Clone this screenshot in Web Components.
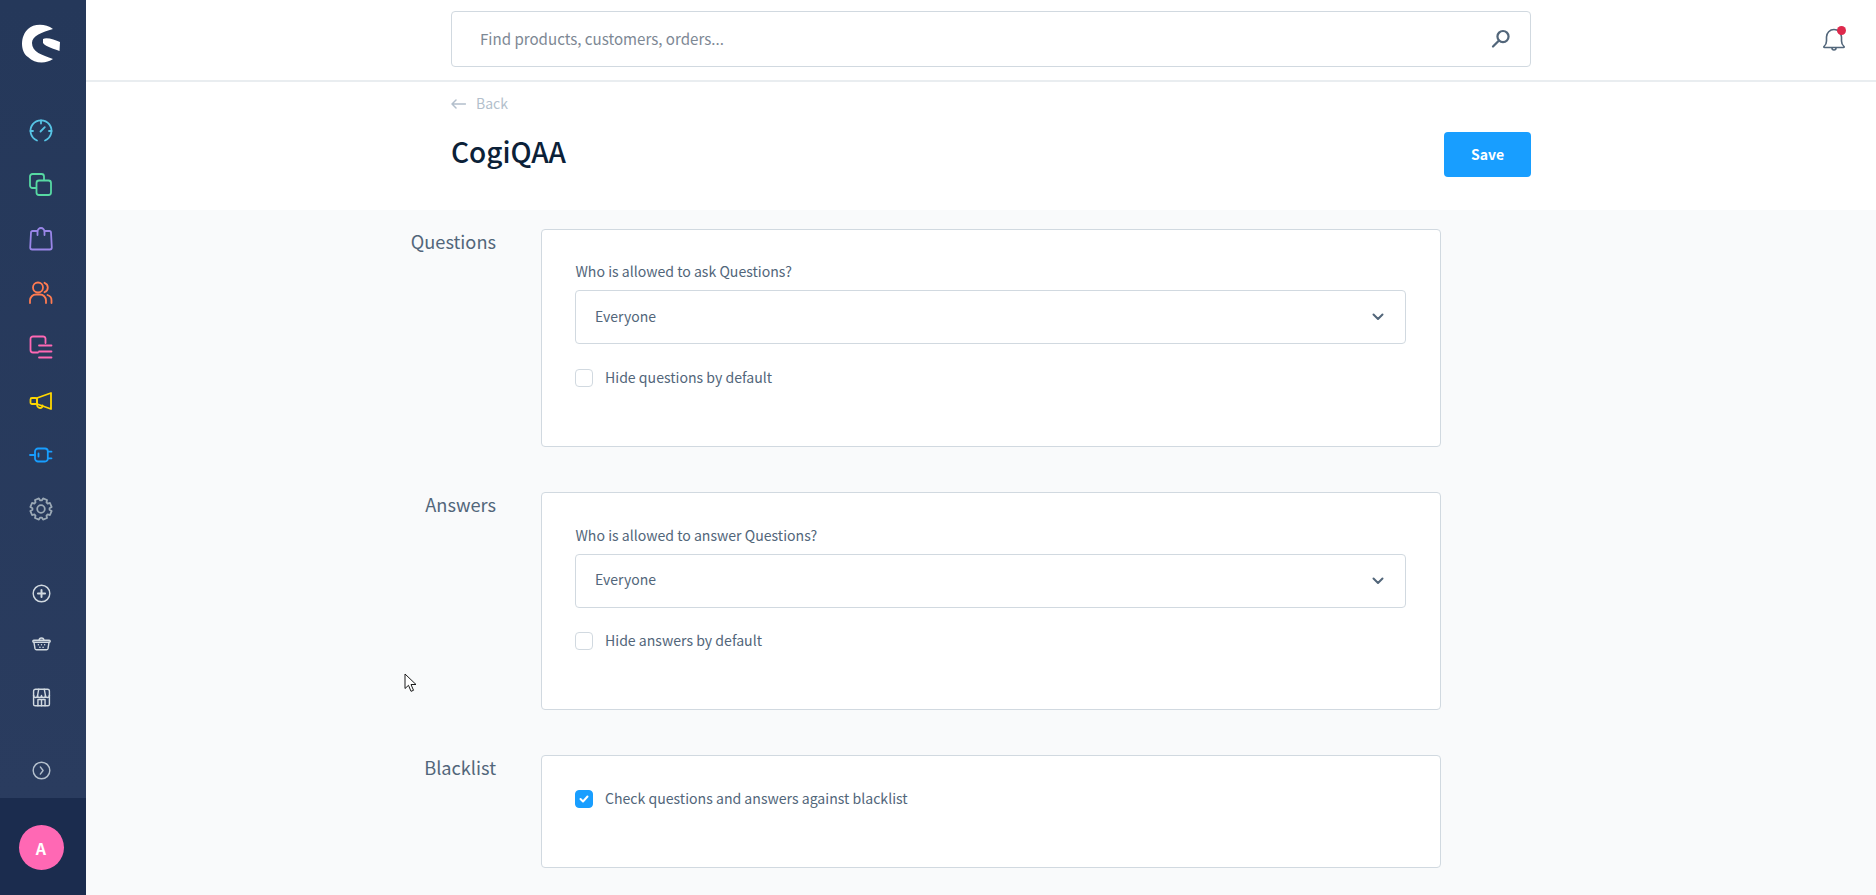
<!DOCTYPE html>
<html lang="en">
<head>
<meta charset="utf-8">
<title>CogiQAA</title>
<style>
  html, body { margin: 0; height: 100%; overflow: hidden; }
  body {
    font-family: "Noto Sans CJK SC", "Noto Sans", sans-serif;
    color: #52667a;
    background: #f9fafb;
  }
  app-shell { height: 100vh; }
</style>
</head>
<body>
<app-shell>
  <app-sidebar slot="side"></app-sidebar>
  <search-bar></search-bar>
  <smart-bar heading="CogiQAA"></smart-bar>
  <page-content>
    <settings-section heading="Questions">
      <select-field label="Who is allowed to ask Questions?" value="Everyone"></select-field>
      <check-field label="Hide questions by default"></check-field>
    </settings-section>
    <settings-section heading="Answers">
      <select-field style="padding:2px 0 24px;--value-pad:4px" label="Who is allowed to answer Questions?" value="Everyone"></select-field>
      <check-field label="Hide answers by default"></check-field>
    </settings-section>
    <settings-section heading="Blacklist">
      <check-field style="margin-top:4px" label="Check questions and answers against blacklist" checked></check-field>
    </settings-section>
  </page-content>
  <mouse-pointer></mouse-pointer>
</app-shell>

<script>
  // 8 lobes round the centre of a 24 box
  function gearPath() {
    let d = "";
    for (let i = 0; i < 8; i++) {
      const a = (i * Math.PI) / 4 + Math.PI / 8;
      const pts = [
        [8.6, a - 0.3],
        [10.8, a - 0.2],
        [10.8, a + 0.2],
        [8.6, a + 0.3],
      ];
      pts.forEach(([r, t], j) => {
        const x = (12 + r * Math.cos(t)).toFixed(2);
        const y = (12 + r * Math.sin(t)).toFixed(2);
        d += (i === 0 && j === 0 ? "M" : "L") + x + " " + y;
      });
    }
    return d + "Z";
  }

  const ICONS = {
    dashboard: `<path d="M8 21.500A10.500 10.500 0 1 1 16 21.500"/><path d="M12 1.500v3M1.500 12h2.500M20 12h2.500"/><path d="M11.500 12.500l4.300-4.300"/>`,
    products: `<rect x="1" y="1" width="14" height="14" rx="2.500"/><rect x="7.500" y="7.500" width="14.500" height="14.500" rx="2.500" fill="var(--side-bg)"/>`,
    orders: `<path d="M8.500 4H3.500A1.500 1.500 0 0 0 2 5.500L1.200 20.500a2 2 0 0 0 2 2h17.600a2 2 0 0 0 2-2L22 5.500A1.500 1.500 0 0 0 20.500 4H15.500"/><path d="M8.500 8V4.500a3.500 3.500 0 0 1 7 0V8"/>`,
    customers: `<circle cx="9" cy="6.500" r="5"/><path d="M1 22v-2.500a6 6 0 0 1 6-6h4a6 6 0 0 1 6 6V22"/><path d="M15.500 1.800a5 5 0 0 1 0 9.400M18.500 14a5.500 5.500 0 0 1 4 5.500V22"/>`,
    content: `<path d="M16.500 8V3.500A2.500 2.500 0 0 0 14 1.500H4A2.500 2.500 0 0 0 1.500 4v11A2.500 2.500 0 0 0 4 17.500h5"/><path d="M10 10.500h12.500M10 16.500h12.500M10 22.500h12.500"/>`,
    marketing: `<path d="M8 9 22 4v16L8 15Z"/><rect x="1.500" y="9" width="6.500" height="6" rx="1.500"/><path d="M8 15.500c0 2 1.500 3.500 3 3.500s2.500-1 2.500-2.500"/>`,
    plugin: `<path d="M1 12h5"/><path d="M9 5.500h7a2.800 2.800 0 0 1 2.800 2.800v7.400a2.800 2.800 0 0 1-2.800 2.800H9c-1.500 0-3-1.500-3-3V8.500c0-1.500 1.500-3 3-3Z"/><path d="M18.800 8.700H22.500M18.800 15.300H22.500M9.500 10.500v3"/>`,
    settings: `<circle cx="12" cy="12" r="3.800"/><path d="${gearPath()}"/>`,
    add: `<circle cx="12" cy="12" r="10.500"/><path d="M12 7.500v9M7.500 12h9" stroke-width="2.500"/>`,
    basket: `<path d="M2.500 10.500l1.300 8a2 2 0 0 0 2 1.500h12.400a2 2 0 0 0 2-1.500l1.300-8"/><rect x="1" y="8" width="22" height="2.500" rx="1.250"/><path d="M9 8a3 3 0 0 1 6 0"/><path d="M8 13.500v.1M12 13.500v.1M16 13.500v.1M10 16.800v.1M14 16.800v.1"/>`,
    shop: `<path d="M2 9.500V4a2.500 2.500 0 0 1 2.500-2.500h15A2.500 2.500 0 0 1 22 4v5.500"/><path d="M2 9.500v11A2 2 0 0 0 4 22.500h16a2 2 0 0 0 2-2v-11"/><path d="M2 9.500a2.500 2.500 0 0 0 5 0 2.500 2.500 0 0 0 5 0 2.500 2.500 0 0 0 5 0 2.500 2.500 0 0 0 5 0"/><path d="M7 9.500 8.500 1.500M17 9.500 15.500 1.500"/><path d="M7.500 22.500V14.500h9v8M12 14.500v8"/>`,
    collapse: `<circle cx="12" cy="12" r="10.500"/><path d="M10.500 7.500l3.500 4.500-3.500 4.500"/>`,
  };

  class AppShell extends HTMLElement {
    constructor() {
      super();
      this.attachShadow({ mode: "open" });
      this.shadowRoot.innerHTML = `
        <style>
          :host { display: flex; position: relative; overflow: hidden; }
          .side { flex: 0 0 86px; }
          .main { flex: 1; min-width: 0; display: flex; flex-direction: column; }
        </style>
        <div class="side"><slot name="side"></slot></div>
        <div class="main"><slot></slot></div>
      `;
    }
  }

  class NavIcon extends HTMLElement {
    constructor() {
      super();
      this.attachShadow({ mode: "open" });
    }
    connectedCallback() {
      const size = this.getAttribute("size") || 24;
      this.shadowRoot.innerHTML = `
        <style>
          :host { display: flex; align-items: center; justify-content: center; height: 54px; padding-right: 4px; }
          svg { fill: none; stroke: ${this.getAttribute("color")}; stroke-width: 1.8; stroke-linecap: round; stroke-linejoin: round; overflow: visible; }
        </style>
        <svg width="${size}" height="${size}" viewBox="0 0 24 24">${ICONS[this.getAttribute("name")]}</svg>
      `;
    }
  }

  class AppSidebar extends HTMLElement {
    constructor() {
      super();
      this.attachShadow({ mode: "open" });
      const main = [
        ["dashboard", "#57c4e5"],
        ["products", "#57d9a3"],
        ["orders", "#9a86e8"],
        ["customers", "#ff7b51"],
        ["content", "#ff68b4"],
        ["marketing", "#ffd700"],
        ["plugin", "#189eff"],
        ["settings", "#9aa8b5"],
      ];
      this.shadowRoot.innerHTML = `
        <style>
          :host {
            display: flex; flex-direction: column; height: 100%;
            --side-bg: #26395b;
            background: linear-gradient(180deg, #25385a, #2a3c5f 798px);
          }
          .logo { height: 104px; flex: none; }
          .logo svg { display: block; }
          .secondary { margin-top: 35px; }
          .secondary nav-icon[name="add"] { height: 45px; }
          .spacer { flex: 1; }
          .footer {
            flex: none; height: 97px; box-sizing: border-box; background: #1b2c4e; padding: 2px 4px 0 0;
            display: flex; align-items: center; justify-content: center;
          }
          .avatar {
            width: 45px; height: 45px; border-radius: 50%; background: #ff68b4;
            color: #fff; font-weight: 700; font-size: 16px;
            display: flex; align-items: center; justify-content: center;
          }
        </style>
        <div class="logo">
          <svg width="86" height="104" viewBox="0 0 86 104">
            <path fill="#fff" d="M53 29C45 23 33 24 28 29C20 36 20 52 28 57C35 64 46 64 53 59C42 55 32 52 32 43C32 36 42 32 53 29Z"/>
            <path fill="#fff" d="M43 39C47 37 55 40 60 42L59.500 51C55 49 46 47 43 43Z"/>
          </svg>
        </div>
        <div>
          ${main.map(([n, c]) => `<nav-icon name="${n}" color="${c}"></nav-icon>`).join("")}
        </div>
        <div class="secondary">
          <nav-icon name="add" color="#d1d9e0" size="19"></nav-icon>
          <nav-icon name="basket" color="#d1d9e0" size="19"></nav-icon>
          <nav-icon name="shop" color="#d1d9e0" size="19"></nav-icon>
        </div>
        <div class="spacer"></div>
        <nav-icon name="collapse" color="#b3bfcc" size="19"></nav-icon>
        <div class="footer" style="margin-top:1px"><div class="avatar">A</div></div>
      `;
    }
  }

  class SearchBar extends HTMLElement {
    constructor() {
      super();
      this.attachShadow({ mode: "open" });
      this.shadowRoot.innerHTML = `
        <style>
          :host {
            display: flex; flex: none; height: 82px; box-sizing: border-box; background: #fff;
            border-bottom: 2px solid #e9edf0; padding: 11px 0 0 365px;
            position: relative;
          }
          .box {
            width: 1080px; height: 56px; box-sizing: border-box;
            border: 1px solid #d1d9e0; border-radius: 4px;
            display: flex; align-items: center; justify-content: space-between;
            padding: 0 19px 0 28px;
          }
          .hint { font-size: 15.1px; color: #7d8894; padding-bottom: 2px; }
          .bell { position: absolute; left: 1735px; top: 26px; }
          svg { fill: none; stroke: #52667a; stroke-width: 2; stroke-linecap: round; stroke-linejoin: round; display: block; }
          .bell { stroke-width: 1.6; }
        </style>
        <div class="box">
          <span class="hint">Find products, customers, orders...</span>
          <svg width="20" height="20" viewBox="0 0 18 18"><circle cx="10.800" cy="6.800" r="5"/><path d="M7.200 10.400 1.800 15.800"/></svg>
        </div>
        <svg class="bell" width="26" height="26" viewBox="0 0 26 26">
          <path d="M3 20.500c1.500-1.200 2.500-3 2.500-5.500V11a7.500 7.500 0 0 1 15 0v4c0 2.500 1 4.300 2.500 5.500.4.500.2 1-.5 1H3.500c-.7 0-.9-.5-.5-1Z"/>
          <path d="M11 22a2 2 0 0 0 4 0"/>
          <circle cx="20.500" cy="4.500" r="4.500" fill="#de294c" stroke="none"/>
        </svg>
      `;
    }
  }

  class SmartBar extends HTMLElement {
    constructor() {
      super();
      this.attachShadow({ mode: "open" });
    }
    connectedCallback() {
      this.shadowRoot.innerHTML = `
        <style>
          :host { display: block; flex: none; height: 128px; background: #fff; padding-left: 365px; }
          .inner { width: 1080px; }
          .back {
            display: flex; align-items: center; gap: 10px; height: 43px;
            font-size: 14px; color: #b3bfcc;
          }
          .back span { padding-bottom: 1px; }
          .row { display: flex; justify-content: space-between; align-items: flex-start; }
          h1 { margin: 0; font-size: 28px; font-weight: 500; line-height: 52px; color: #0b2138; }
          button {
            all: unset; box-sizing: border-box; width: 87px; height: 45px; margin-top: 7px;
            padding-bottom: 2px; background: #189eff; border-radius: 4px; color: #fff;
            font-size: 14px; font-weight: 700; text-align: center;
          }
          svg { fill: none; stroke: #b3bfcc; stroke-width: 1.500; stroke-linecap: round; stroke-linejoin: round; }
        </style>
        <div class="inner">
          <div class="back">
            <svg width="15" height="10" viewBox="0 0 15 10"><path d="M14.500 5H1M5 1 1 5l4 4"/></svg>
            <span>Back</span>
          </div>
          <div class="row">
            <h1>${this.getAttribute("heading")}</h1>
            <button>Save</button>
          </div>
        </div>
      `;
    }
  }

  class PageContent extends HTMLElement {
    constructor() {
      super();
      this.attachShadow({ mode: "open" });
      this.shadowRoot.innerHTML = `
        <style>
          :host {
            display: flex; flex-direction: column; gap: 45px; flex: 1; min-height: 0;
            padding: 19px 0 0 230px; background: #f9fafb;
          }
        </style>
        <slot></slot>
      `;
    }
  }

  class SettingsSection extends HTMLElement {
    constructor() {
      super();
      this.attachShadow({ mode: "open" });
    }
    connectedCallback() {
      this.shadowRoot.innerHTML = `
        <style>
          :host { display: grid; grid-template-columns: 180px 900px; column-gap: 45px; }
          h3 {
            margin: 0; text-align: right; font-size: 18.2px; font-weight: 400;
            line-height: 24px; color: #52667a;
          }
          .card {
            box-sizing: border-box; background: #fff; border: 1px solid #d1d9e0; border-radius: 4px;
            padding: 30px 34px 59px 33px;
          }
        </style>
        <h3>${this.getAttribute("heading")}</h3>
        <div class="card"><slot></slot></div>
      `;
    }
  }

  class SelectField extends HTMLElement {
    constructor() {
      super();
      this.attachShadow({ mode: "open" });
    }
    connectedCallback() {
      this.shadowRoot.innerHTML = `
        <style>
          :host { display: block; padding: 1px 0 25px; }
          label { display: block; font-size: 14.1px; line-height: 20px; margin-bottom: 9px; color: #52667a; padding-left: .5px; }
          .select {
            box-sizing: border-box; height: 54px; border: 1px solid #d1d9e0; border-radius: 4px;
            display: flex; align-items: center; justify-content: space-between;
            padding: 0 21px 0 19px; font-size: 14px; color: #52667a;
          }
          .select span { padding-bottom: var(--value-pad, 2px); }
          svg { fill: none; stroke: #52667a; stroke-width: 2; stroke-linecap: round; stroke-linejoin: round; }
        </style>
        <label>${this.getAttribute("label")}</label>
        <div class="select">
          <span>${this.getAttribute("value")}</span>
          <svg width="12" height="8" viewBox="0 0 12 8"><path d="M1.500 1.500 6 6l4.500-4.500"/></svg>
        </div>
      `;
    }
  }

  class CheckField extends HTMLElement {
    constructor() {
      super();
      this.attachShadow({ mode: "open" });
    }
    connectedCallback() {
      const checked = this.hasAttribute("checked");
      this.shadowRoot.innerHTML = `
        <style>
          :host { display: flex; align-items: center; gap: 12px; height: 18px; font-size: 14.1px; color: #52667a; }
          .box {
            box-sizing: border-box; width: 18px; height: 18px; border-radius: 4px;
            border: 1px solid ${checked ? "#189eff" : "#d1d9e0"};
            background: ${checked ? "#189eff" : "#fff"};
            display: flex; align-items: center; justify-content: center;
          }
          .text { padding-bottom: 2px; }
          svg { fill: none; stroke: #fff; stroke-width: 2; stroke-linecap: round; stroke-linejoin: round; }
        </style>
        <span class="box">${checked ? '<svg width="10" height="8" viewBox="0 0 10 8"><path d="M1.500 4 4 6.500 8.500 1.500"/></svg>' : ""}</span>
        <span class="text">${this.getAttribute("label")}</span>
      `;
    }
  }

  // the mouse pointer caught in the screenshot
  class MousePointer extends HTMLElement {
    constructor() {
      super();
      this.attachShadow({ mode: "open" });
      this.shadowRoot.innerHTML = `
        <style>:host { position: absolute; left: 404px; top: 673px; line-height: 0; }</style>
        <svg width="14" height="20" viewBox="0 0 14 20">
          <path d="M1 1v14.500l3.500-3.200 2.500 6 2.500-1-2.500-5.800h5Z" fill="#fff" stroke="#1a1a1a" stroke-width="1"/>
        </svg>
      `;
    }
  }

  customElements.define("app-shell", AppShell);
  customElements.define("nav-icon", NavIcon);
  customElements.define("app-sidebar", AppSidebar);
  customElements.define("search-bar", SearchBar);
  customElements.define("smart-bar", SmartBar);
  customElements.define("page-content", PageContent);
  customElements.define("settings-section", SettingsSection);
  customElements.define("select-field", SelectField);
  customElements.define("check-field", CheckField);
  customElements.define("mouse-pointer", MousePointer);
</script>
</body>
</html>
